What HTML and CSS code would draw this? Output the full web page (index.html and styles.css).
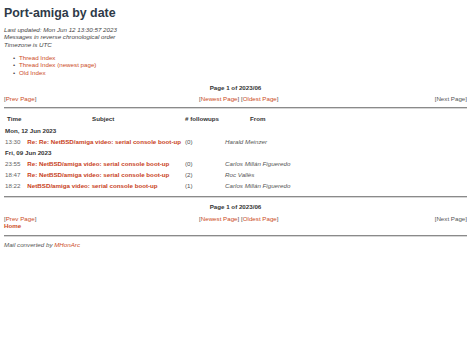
FILE: index.html
```html
<!DOCTYPE html>
<html>
<head>
<meta charset="utf-8">
<title>Port-amiga by date</title>
<link rel="stylesheet" href="styles.css">
</head>
<body>
<div class="page">
  <h1 class="title">Port-amiga by date</h1>
  <p class="meta">Last updated: Mon Jun 12 13:30:57 2023<br>Messages in reverse chronological order<br>Timezone is UTC</p>
  <ul class="links">
    <li><a href="#">Thread Index</a></li>
    <li><a href="#">Thread Index (newest page)</a></li>
    <li><a href="#">Old Index</a></li>
  </ul>

  <div class="pageinfo">Page 1 of 2023/06</div>
  <div class="nav">
    <span class="nav-left">[<a href="#">Prev Page</a>]</span>
    <span class="nav-mid">[<a href="#">Newest Page</a>] [<a href="#">Oldest Page</a>]</span>
    <span class="nav-right">[Next Page]</span>
  </div>
  <hr class="rule">

  <table class="msgs">
    <thead>
      <tr><th class="c-time">Time</th><th class="c-subj">Subject</th><th class="c-fu"># followups</th><th class="c-from">From</th></tr>
    </thead>
    <tbody>
      <tr class="day"><td colspan="4">Mon, 12 Jun 2023</td></tr>
      <tr><td class="time">13:30</td><td class="subj"><a href="#">Re: Re: NetBSD/amiga video: serial console boot-up</a></td><td class="fu">(0)</td><td class="from">Harald Meinzer</td></tr>
      <tr class="day"><td colspan="4">Fri, 09 Jun 2023</td></tr>
      <tr><td class="time">23:55</td><td class="subj"><a href="#">Re: NetBSD/amiga video: serial console boot-up</a></td><td class="fu">(0)</td><td class="from">Carlos Millán Figueredo</td></tr>
      <tr><td class="time">18:47</td><td class="subj"><a href="#">Re: NetBSD/amiga video: serial console boot-up</a></td><td class="fu">(2)</td><td class="from">Roc Vallès</td></tr>
      <tr><td class="time">18:22</td><td class="subj"><a href="#">NetBSD/amiga video: serial console boot-up</a></td><td class="fu">(1)</td><td class="from">Carlos Millán Figueredo</td></tr>
    </tbody>
  </table>
  <hr class="rule rule-b">

  <div class="pageinfo pageinfo-b">Page 1 of 2023/06</div>
  <div class="nav nav-b">
    <span class="nav-left">[<a href="#">Prev Page</a>]</span>
    <span class="nav-mid">[<a href="#">Newest Page</a>] [<a href="#">Oldest Page</a>]</span>
    <span class="nav-right">[Next Page]</span>
  </div>
  <div class="home"><a href="#">Home</a></div>
  <hr class="rule rule-c">
  <p class="footer">Mail converted by <a href="#">MHonArc</a></p>
</div>
</body>
</html>
```

FILE: styles.css
```css
html {
  overflow: hidden;
  background: #ffffff;
}
body {
  margin: 0;
  font-family: "Liberation Sans", Arial, sans-serif;
  font-size: 6.2px;
  color: #333333;
}
.page {
  width: 463px;
  padding: 6px 0 0 4px;
}
a {
  color: #cc4b1e;
  text-decoration: none;
}
.title {
  margin: 0;
  font-size: 12.4px;
  font-weight: bold;
  color: #2e3a48;
  line-height: 14px;
}
.meta {
  margin: 6px 0 0 0;
  font-style: italic;
  color: #444444;
  line-height: 7.3px;
}
.links {
  margin: 6px 0 0 0;
  padding-left: 15px;
  line-height: 7.5px;
  color: #444444;
  list-style: none;
}
.links li::before {
  content: "•";
  display: inline-block;
  width: 6px;
  margin-left: -6px;
}
.pageinfo {
  margin-top: 8px;
  text-align: center;
  font-weight: bold;
  line-height: 8px;
}
.pageinfo-b {
  margin-top: 5px;
}
.nav {
  display: grid;
  grid-template-columns: 195px auto 1fr;
  margin-top: 3px;
  line-height: 8px;
  color: #555555;
}
.nav-b {
  margin-top: 4px;
  margin-bottom: -1px;
}
.nav-right {
  justify-self: end;
}
.rule {
  margin: 4px 0 0 0;
  border: 0;
  border-top: 1px solid #8a8a8a;
  border-bottom: 1px solid #d6d6d6;
  height: 0;
}
.msgs {
  border-collapse: collapse;
  margin-top: 5px;
  line-height: 7px;
}
.msgs th {
  font-weight: bold;
  text-align: center;
  padding: 1px 1px 3px 1px;
  color: #333333;
}
.msgs th.c-fu {
  text-align: left;
  padding-right: 5px;
}
.msgs td {
  padding: 2px 1px;
  text-align: left;
  white-space: nowrap;
}
.msgs th.c-time { text-align: left; padding-left: 3px; }
.day td {
  font-weight: bold;
  color: #333333;
  padding-left: 1px;
}
.time {
  color: #666666;
}
.msgs td.subj {
  padding-left: 5px;
  padding-right: 3px;
}
.subj a {
  font-weight: bold;
  color: #c8421b;
}
.fu {
  color: #555555;
}
.msgs td.fu {
  padding-right: 22px;
}
.from {
  font-style: italic;
  color: #555555;
}
.rule-b {
  margin-top: 5px;
}
.home {
  font-weight: bold;
  line-height: 8px;
}
.rule-c {
  margin-top: 5px;
}
.footer {
  margin: 4px 0 0 0;
  font-style: italic;
  color: #555555;
  line-height: 8px;
}
```
